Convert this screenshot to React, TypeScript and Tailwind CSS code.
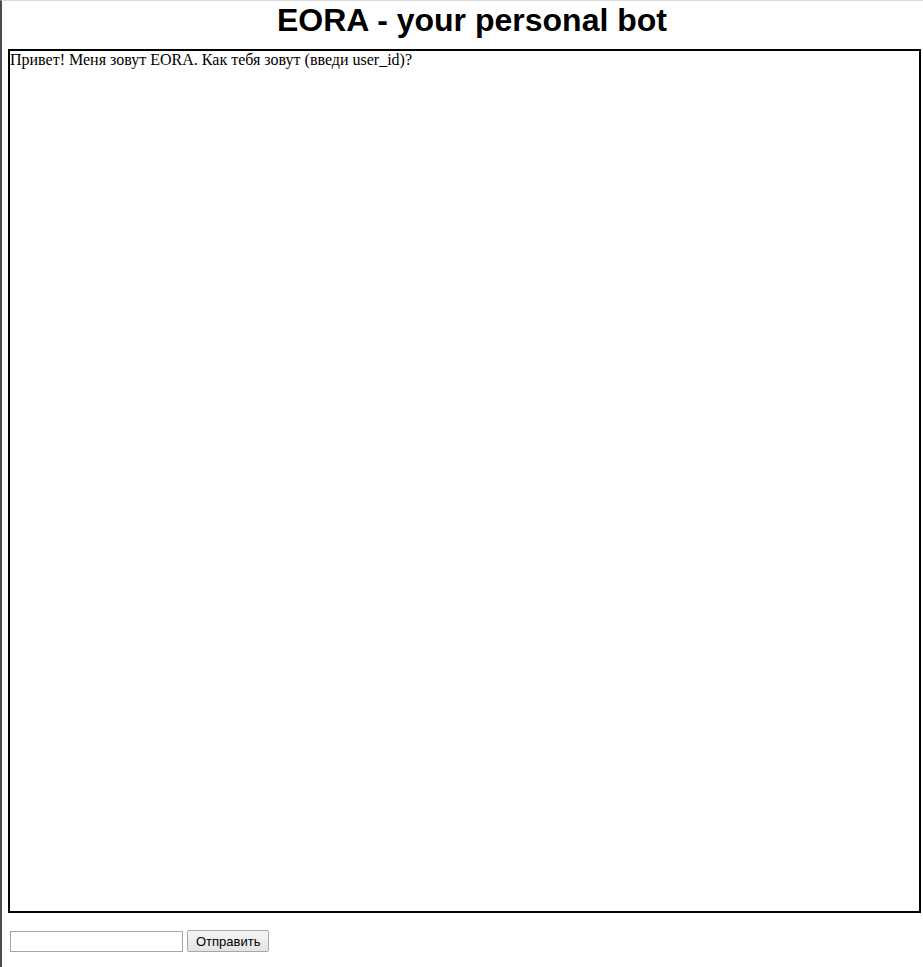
import React, { useState } from 'react'

const App = () => {
  const [msg, setMsg] = useState('')

  return (
    <div className="min-h-[967px] w-full bg-white border-l-2 border-l-[#4b4e48] border-t border-t-[#d9d9d9] flex flex-col pl-[6px] pr-[2px]">
      <h1 className="text-center font-bold text-[32px] leading-[37px] mt-[1px] pl-[15px] text-black" style={{ fontFamily: '"Liberation Sans", Arial, sans-serif' }}>
        EORA - your personal bot
      </h1>

      <div className="mt-[10px] h-[864px] border-2 border-black overflow-y-auto text-[16px] leading-[18px] text-black" style={{ fontFamily: '"Liberation Serif", "Times New Roman", serif' }}>
        <p>Привет! Меня зовут EORA. Как тебя зовут (введи user_id)?</p>
      </div>

      <form
        className="flex items-center gap-1 mt-[17px] pl-[2px]"
        style={{ fontFamily: '"Liberation Sans", Arial, sans-serif' }}
        onSubmit={(e) => e.preventDefault()}
      >
        <input
          value={msg}
          onChange={(e) => setMsg(e.target.value)}
          className="w-[173px] h-[21px] border border-[#a5a5a5] bg-white px-1 text-[13px] outline-none"
        />
        <button
          type="submit"
          className="h-[22px] px-[8px] border border-[#a7a7a7] rounded-[2px] bg-gradient-to-b from-[#f6f6f6] to-[#e3e3e3] text-[13px] text-black leading-none"
        >
          Отправить
        </button>
      </form>
    </div>
  )
}

export default App
